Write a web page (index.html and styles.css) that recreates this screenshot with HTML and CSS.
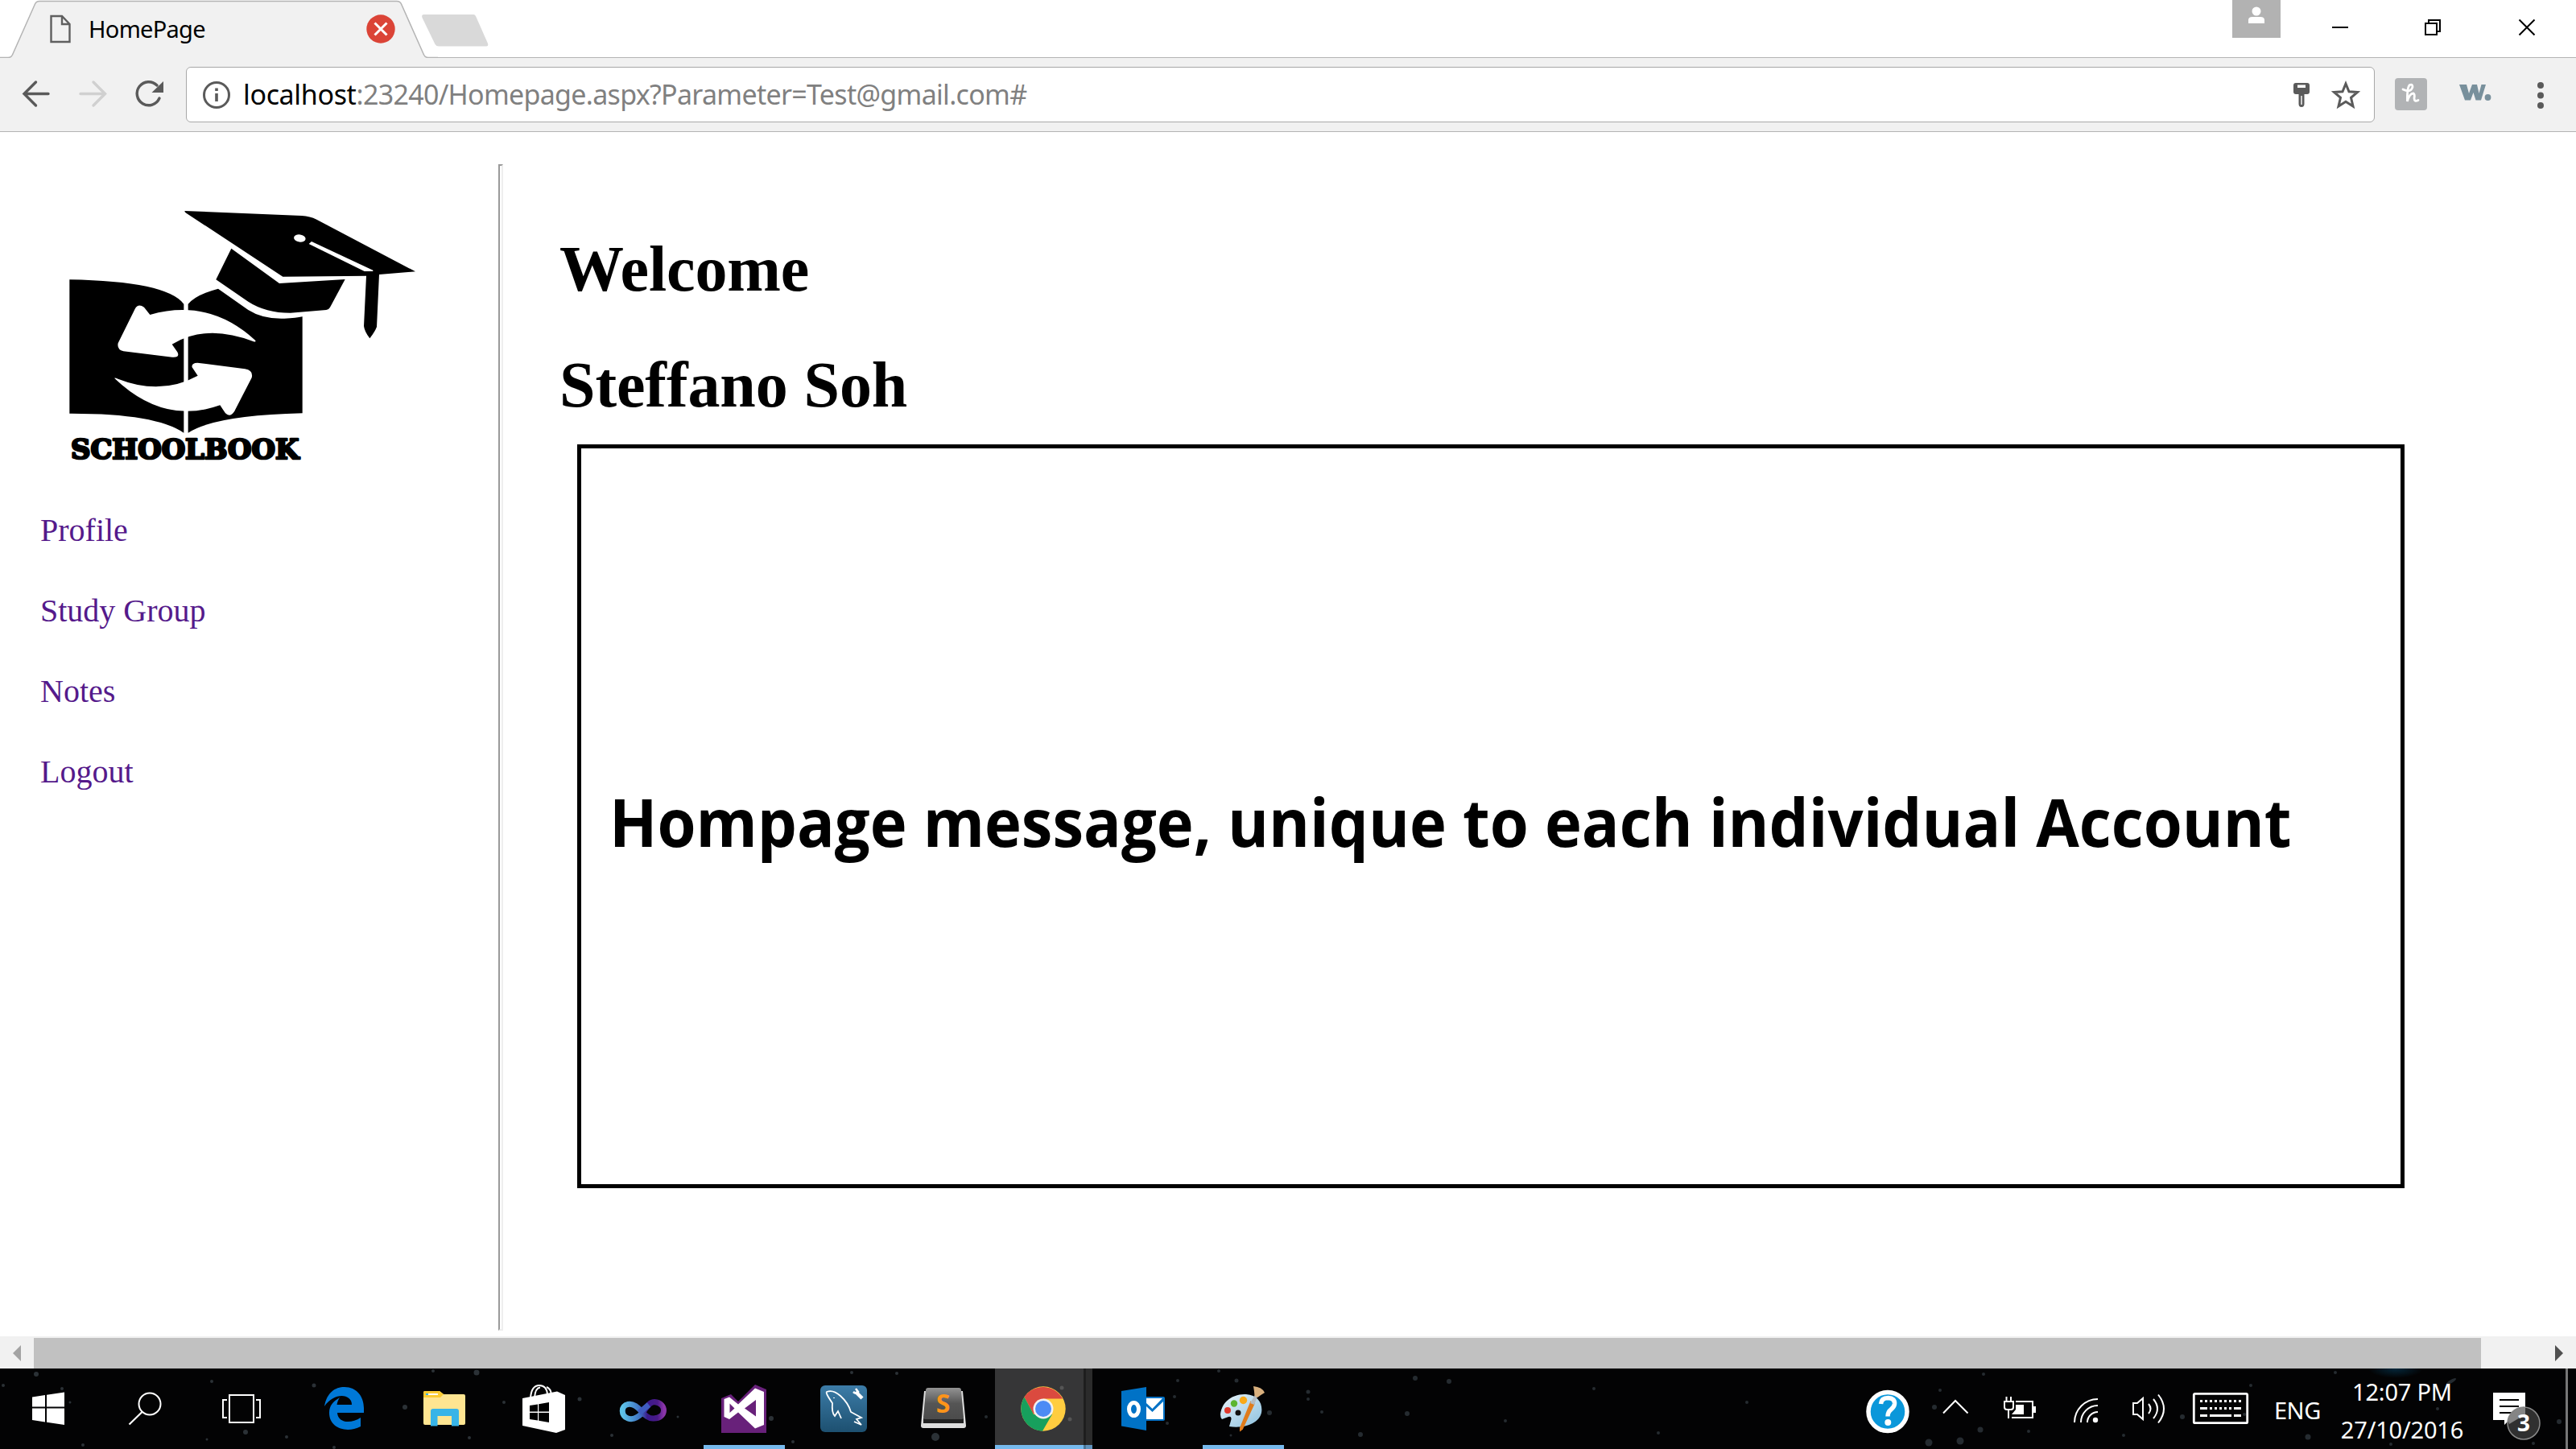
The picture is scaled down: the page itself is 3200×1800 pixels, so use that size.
FILE: index.html
```html
<!DOCTYPE html>
<html lang="en">
<head>
<meta charset="utf-8">
<title>HomePage</title>
<link rel="stylesheet" href="styles.css">
</head>
<body>
<header class="tabstrip">
  <div class="tab">
    <svg class="tab-shape" viewBox="0 0 544 72"><path d="M0 71.5H11Q14 71.5 15 68L43 5Q45 1.500 49 1.500H493Q497 1.500 499 5L527 68Q528 71.500 532 71.500H544V72H0z" fill="#f1f1f1"/><path d="M0 71.500H10Q14 71.500 15.500 68L43.500 5Q45 1.500 49 1.500H493Q497 1.500 498.500 5L526.500 68Q528 71.500 532 71.500H544" fill="none" stroke="#b4b4b4" stroke-width="1.500"/></svg>
    <svg class="tab-doc" viewBox="62 18 27 38"><path d="M63.500 21H77L86.500 31V53H63.500zM77 21V31H86.500" fill="none" stroke="#5f5f5f" stroke-width="2.400"/></svg>
    <span class="tab-title">HomePage</span>
    <svg class="tab-close" viewBox="0 0 36 36"><circle cx="18" cy="18" r="17.700" fill="#db4437"/><path d="M10.500 10.500L25.500 25.500M25.500 10.500L10.500 25.500" stroke="#fff" stroke-width="3"/></svg>
  </div>
  <svg class="newtab" viewBox="523 17 85 42"><path d="M527 18H588Q590 18 591 20L606 54Q607 57.500 604 57.500H545Q542 57.500 540.500 55L524.500 22Q523 18 527 18z" fill="#d9d9d9"/></svg>
  <div class="win">
    <svg viewBox="2773 0 427 71" width="427" height="71"><path d="M2773 0h60v47h-60z" fill="#b2b2b2"/><circle cx="2803" cy="14" r="5.500" fill="#fff"/><path d="M2793 29V25Q2793 21 2798 21H2808Q2813 21 2813 25V29z" fill="#fff"/><path d="M2897 33h20v2h-20z"/><path d="M3013 29h14v14h-14zM3017 29v-4h14v14h-4" fill="none" stroke="#000" stroke-width="2"/><path d="M3129.500 24.500L3148.500 43.500M3148.500 24.500L3129.500 43.500" stroke="#000" stroke-width="2"/></svg>
  </div>
</header>
<div class="toolbar">
  <svg class="nav-icons" viewBox="0 72 231 91"><g fill="none" stroke-width="3.400" stroke-linecap="round"><path d="M60 116.500H31M44.500 102L30 116.500L44.500 131" stroke="#5a5a5a"/><path d="M100 116.500H130M116 102L130.500 116.500L116 131" stroke="#d0d0d0"/><path d="M198 122A14.500 14.500 0 1 1 195 106" stroke="#5a5a5a"/></g><path d="M203 101V115H188.500z" fill="#5a5a5a"/></svg>
  <div class="omnibox">
    <svg class="info" viewBox="0 0 36 36"><circle cx="18" cy="18" r="15.500" fill="none" stroke="#5a5a5a" stroke-width="3"/><path d="M16.200 16h3.600v10h-3.600zM16.200 9.500h3.600v3.600h-3.600z" fill="#5a5a5a"/></svg>
    <span class="url"><b class="host">localhost</b><span class="path">:23240/Homepage.aspx?Parameter=Test@gmail.com#</span></span>
    <svg class="omni-right" viewBox="2840 84 108 66"><path d="M2851 102h14q3 0 3 3v8q0 3-3 3h-3.500v12q0 4-3.500 4t-3.500-4v-12h-3.500q-3 0-3-3v-8q0-3 3-3z" fill="#5a5a5a"/><path d="M2853 104.500h10v3.500h-10zM2857.300 118h1.400v11h-1.400z" fill="#fff"/><path d="M2913 103L2917 112.700L2927.500 113.500L2919.500 120.300L2922 131L2913 125.300L2904 131L2906.500 120.300L2898.500 113.500L2909 112.700z" fill="none" stroke="#5a5a5a" stroke-width="3"/></svg>
  </div>
  <svg class="ext" viewBox="2950 72 250 91"><rect x="2975" y="97" width="40" height="40" rx="4" fill="#b1b3b5"/><path d="M2985 111Q2995 116 2997 108Q2997 104 2993.500 105.500Q2990 108 2990.500 126Q2993 116 2998 116Q3000 117 2999 122Q2999 127 3004 124.500" fill="none" stroke="#fff" stroke-width="2.800" stroke-linecap="round"/><path d="M3055 105H3064L3067 116L3071 105H3077L3079.500 116L3082.500 105H3088L3082 124.500H3075.500L3072.500 115L3069 124.500H3062z" fill="#78909c"/><circle cx="3090.500" cy="121" r="3.900" fill="#78909c"/><g fill="#5a5a5a"><circle cx="3156" cy="106" r="4"/><circle cx="3156" cy="118.500" r="4"/><circle cx="3156" cy="131" r="4"/></g></svg>
</div>
<main class="page">
  <aside class="sidebar">
    <svg class="logo" viewBox="0 0 1440 1080">
      <path d="M79 352Q440 358 505 443V923Q400 850 79 851zM521 443Q550 408 633 386L745 465Q800 500 880 497Q925 495 947 490V850Q620 858 521 923z"/>
      <path d="M508 96L945 114Q975 116 1000 128L1368 322L1233 333L1224 528Q1218 545 1198 571Q1178 545 1176 525L1185 338L874 341L514 104Q508 101 508 96zM682 236L861 366L1106 351L1050 455Q1046 463 1036 465L902 476Q810 476 745 434L625 352z"/>
      <g fill="#fff"><ellipse cx="937" cy="198" rx="22" ry="14" transform="rotate(8 937 198)"/><path d="M981 210L1210 317V321H1178L971 219z"/>
      <path d="M323 461Q335 440 357 455L379 483Q600 420 772 579Q774 585 765 583Q590 515 461 593L481 622Q492 643 462 641L280 619Q255 613 260 589z"/>
      <path d="M247 720Q246 716 260 722Q420 785 557 710L536 679Q532 663 556 662L733 685Q765 690 758 718L694 842Q678 867 660 850L640 820Q430 895 247 720z"/></g>
      <text x="84" y="1020" textLength="850" lengthAdjust="spacingAndGlyphs" class="logo-text">SCHOOLBOOK</text>
    </svg>
    <nav class="menu"><a>Profile</a><a>Study Group</a><a>Notes</a><a>Logout</a></nav>
  </aside>
  <div class="divider"></div>
  <section class="content">
    <h1>Welcome</h1>
    <h1>Steffano Soh</h1>
    <div class="message"><span class="msg">Hompage message, unique to each individual Account</span></div>
  </section>
</main>
<div class="scrollbar">
  <svg width="42" height="40" viewBox="0 0 42 40"><path d="M26 11V31L16 21z" fill="#a3a3a3"/></svg>
  <div class="thumb"></div>
  <svg width="118" height="40" viewBox="0 0 118 40"><path d="M92 11V31L102 21z" fill="#505050"/></svg>
</div>
<footer class="taskbar">
  <svg class="stars" viewBox="0 1700 3200 100">
    <defs><radialGradient id="neb"><stop offset="0" stop-color="#04283c"/><stop offset="1" stop-color="#04283c" stop-opacity="0"/></radialGradient></defs>
    <ellipse cx="2976" cy="1700" rx="34" ry="12" fill="url(#neb)"/>
    <g class="star-a"><circle cx="45" cy="1707" r="3"/><circle cx="4" cy="1721" r="2"/><circle cx="77" cy="1725" r="2"/><circle cx="87" cy="1742" r="1.500"/><circle cx="263" cy="1716" r="2"/><circle cx="390" cy="1721" r="2.500"/><circle cx="503" cy="1748" r="3"/><circle cx="305" cy="1779" r="3"/><circle cx="356" cy="1785" r="2"/><circle cx="103" cy="1795" r="2"/><circle cx="257" cy="1788" r="1.500"/><circle cx="592" cy="1705" r="3.500"/><circle cx="538" cy="1703" r="2"/><circle cx="583" cy="1786" r="2"/><circle cx="415" cy="1798" r="2"/><circle cx="626" cy="1742" r="2"/><circle cx="720" cy="1738" r="2.500"/><circle cx="1058" cy="1705" r="2"/><circle cx="1114" cy="1706" r="2"/><circle cx="958" cy="1762" r="3"/><circle cx="1162" cy="1785" r="5"/><circle cx="760" cy="1783" r="2"/><circle cx="985" cy="1791" r="2"/><circle cx="842" cy="1760" r="1.500"/></g>
    <g class="star-b"><circle cx="1536" cy="1715" r="2.500"/><circle cx="1463" cy="1715" r="2"/><circle cx="1514" cy="1703" r="2"/><circle cx="1459" cy="1735" r="2"/><circle cx="1577" cy="1755" r="3"/><circle cx="1625" cy="1729" r="2.500"/><circle cx="1625" cy="1738" r="2"/><circle cx="1642" cy="1754" r="2"/><circle cx="1450" cy="1768" r="2"/><circle cx="1225" cy="1760" r="2"/><circle cx="1529" cy="1783" r="1.500"/><circle cx="1690" cy="1782" r="3"/><circle cx="1758" cy="1712" r="3"/><circle cx="1800" cy="1716" r="3"/><circle cx="1748" cy="1756" r="3"/><circle cx="1870" cy="1765" r="2"/><circle cx="1980" cy="1725" r="2"/><circle cx="2060" cy="1780" r="2"/><circle cx="2170" cy="1742" r="2"/><circle cx="2403" cy="1748" r="3"/><circle cx="2396" cy="1792" r="4.500"/><circle cx="2435" cy="1790" r="4.500"/><circle cx="2460" cy="1776" r="3.500"/><circle cx="2464" cy="1707" r="2"/><circle cx="2410" cy="1727" r="2"/><circle cx="2711" cy="1760" r="3"/><circle cx="2638" cy="1783" r="2"/><circle cx="2520" cy="1778" r="2"/><circle cx="2867" cy="1785" r="3.500"/><circle cx="2901" cy="1705" r="2"/><circle cx="3179" cy="1766" r="3"/><circle cx="3028" cy="1750" r="2"/><circle cx="2796" cy="1721" r="2"/><circle cx="2788" cy="1757" r="2"/><circle cx="2970" cy="1794" r="2"/><circle cx="3147" cy="1793" r="2"/><ellipse cx="3045" cy="1716" rx="7" ry="2" transform="rotate(-30 3045 1716)"/></g>
  </svg>
  <svg viewBox="0 1700 120 100" width="120"><path d="M40 1735.500L56 1733V1747.500H40zM58 1732.700L80 1729.500V1747.500H58zM40 1749.500H56V1766.500L40 1764zM58 1749.500H80V1770L58 1766.800z" fill="#fff"/></svg>
  <svg viewBox="120 1700 120 100" width="120"><circle cx="186" cy="1744" r="13.500" fill="none" stroke="#fff" stroke-width="2"/><path d="M176.500 1754L160.500 1769.500" stroke="#fff" stroke-width="2.200"/></svg>
  <svg viewBox="240 1700 126 100" width="126"><path d="M285 1733h30v34h-30zM282 1739h-5v22h5M318 1739h5v22h-5" fill="none" stroke="#fff" stroke-width="2"/></svg>
  <svg viewBox="366 1700 124 100" width="124"><path d="M403 1747C406 1730 416 1723 428 1723C443 1723 452 1735 452 1749V1755H419C420 1768 436 1769 448 1761V1772C430 1781 409 1774 409 1755C409 1746 414 1741 422 1736C420 1739 419 1742 418.500 1745H437C437 1731 415 1729 403 1747z" fill="#0078d7"/></svg>
  <svg viewBox="490 1700 124 100" width="124"><path d="M526 1730Q526 1728 528 1728H546L551 1732H576Q578 1732 578 1734V1768Q578 1770 576 1770H528Q526 1770 526 1768z" fill="#ffe591"/><path d="M526 1730Q526 1728 528 1728H546L551 1732L547 1736H526z" fill="#fccc32"/><path d="M532 1731h12v2h-12z" fill="#fff"/><path d="M529 1731h3v2h-3z" fill="#38b4e8"/><path d="M535 1771.500V1753Q535 1750 538 1750H567Q570 1750 570 1753V1771.500H561V1759H543.500V1771.500z" fill="#38b4e8"/></svg>
  <svg viewBox="614 1700 124 100" width="124"><path d="M649 1737L692 1728.500L702 1733V1776L691 1780L649 1771z" fill="#fff"/><path d="M659 1737Q660 1721 670 1721Q679 1721 680 1732M664 1736Q665 1724 671 1723.500M679 1723Q684 1725 685 1732" fill="none" stroke="#fff" stroke-width="2"/><path d="M658 1746L668 1744.500V1753.500H658zM669.200 1744.200L682 1742V1753.500H669.200zM658 1755H668V1764.500L658 1763zM669.200 1755H682V1767L669.200 1764.700z" fill="#000"/></svg>
  <svg viewBox="738 1700 124 100" width="124"><defs><linearGradient id="inf"><stop offset="0" stop-color="#5ec3e8"/><stop offset=".45" stop-color="#3d6cc0"/><stop offset=".6" stop-color="#3b1a8c"/><stop offset=".85" stop-color="#4a1a88"/><stop offset="1" stop-color="#8a35a8"/></linearGradient></defs><path d="M799 1754C790 1764 783 1763 780 1762C771 1759 771 1746 780 1744.500C794 1742 799 1763 812 1762C828 1762 829 1743 813 1741.500C806 1741.500 803 1749 799 1754z" fill="none" stroke="url(#inf)" stroke-width="7"/><path d="M794 1755L806 1745" stroke="#3f5cc0" stroke-width="7"/></svg>
  <svg viewBox="862 1700 124 100" width="124"><path d="M896 1737L908 1732L917 1741L938 1720L952 1726V1780H896z" fill="#68217a"/><path d="M899.500 1738L906 1735.500L917 1744.500L938 1724.500L949 1729V1770L938 1774.500L917 1754.500L906 1763L899.500 1760zM906.500 1743.500V1755L912.500 1749.500zM939 1739L925 1749.500L939 1759.500z" fill="#fff" fill-rule="evenodd"/><path d="M874 1795h101v5H874z" fill="#76b9ed"/></svg>
  <svg viewBox="986 1700 124 100" width="124"><defs><linearGradient id="sql" x2="0" y2="1"><stop offset="0" stop-color="#3c7ca8"/><stop offset="1" stop-color="#1d5070"/></linearGradient></defs><rect x="1019" y="1721" width="58" height="58" rx="6" fill="url(#sql)"/><path d="M1045 1762L1041 1753L1037 1759Q1033 1755 1034 1743Q1025 1730 1027 1729Q1035 1726 1044 1734Q1054 1743 1057 1754L1070 1761L1064 1763L1070 1770L1061 1766M1036 1736v1" fill="none" stroke="#fff" stroke-width="1.800"/><path d="M1063 1729L1071 1737" stroke="#fff" stroke-width="4.500"/><path d="M1060 1729Q1063 1732 1066 1729L1063 1725" stroke="#fff" stroke-width="2.500" fill="none"/></svg>
  <svg viewBox="1110 1700 126 100" width="126"><defs><linearGradient id="sub" x2="0" y2="1"><stop offset="0" stop-color="#939393"/><stop offset=".5" stop-color="#555"/><stop offset="1" stop-color="#4b4b4b"/></linearGradient></defs><path d="M1148 1728H1196L1200 1771Q1200 1774 1197 1774H1147Q1144 1774 1144 1771z" fill="#dedede"/><path d="M1147 1762H1197V1768H1147z" fill="#222"/><path d="M1150 1727Q1150 1724 1153 1724H1191Q1194 1724 1194 1727L1197 1761Q1197 1763 1195 1763H1149Q1147 1763 1147 1761z" fill="url(#sub)"/><text x="1171.500" y="1755" class="sub-s">S</text></svg>
  <svg viewBox="1236 1700 121 100" width="121"><path d="M1236 1700h110v100h-110z" fill="#363637"/><path d="M1346 1700h3v100h-3z" fill="#1e1e1e"/><path d="M1349 1700h8v100h-8z" fill="#2b2b2b"/><circle cx="1319" cy="1724" r="2.500" fill="#555"/><circle cx="1329" cy="1763" r="2.500" fill="#555"/><path d="M1236 1795h110v5h-110z" fill="#76b9ed"/><path d="M1346 1795h3v5h-3z" fill="#4b7596"/><path d="M1349 1795h8v5h-8z" fill="#6093bd"/><circle cx="1296" cy="1750" r="27.700" fill="#ffcd40"/><path d="M1272.500 1735.500A27.700 27.700 0 0 1 1320 1737.500H1296L1284 1757z" fill="#db4a3f"/><path d="M1272.500 1735.500A27.700 27.700 0 0 0 1295 1777.700L1307 1757L1284 1757z" fill="#17a05d"/><circle cx="1296" cy="1750" r="12.500" fill="#f1f1f1"/><circle cx="1296" cy="1750" r="10" fill="#4c8bf5"/></svg>
  <svg viewBox="1357 1700 125 100" width="125"><rect x="1420" y="1735" width="27" height="30" rx="2" fill="#0072c6"/><path d="M1424 1737H1444L1431.500 1750L1424 1743zM1424 1747L1431.500 1754L1445 1741V1763H1424z" fill="#fff"/><path d="M1393 1728L1424 1723V1777L1393 1771.500z" fill="#0072c6"/><ellipse cx="1408.500" cy="1750.500" rx="6" ry="8" fill="none" stroke="#fff" stroke-width="5"/></svg>
  <svg viewBox="1482 1700 124 100" width="124"><defs><linearGradient id="pal" x2="1" y2="1"><stop offset="0" stop-color="#eaf5fb"/><stop offset="1" stop-color="#8cc0de"/></linearGradient></defs><path d="M1516 1757C1518 1740 1533 1731 1548 1732C1563 1733 1569 1744 1567 1755C1564 1768 1546 1775 1527 1772L1529 1765Q1531 1759 1526 1760L1518 1763Q1516 1761 1516 1757z" fill="url(#pal)"/><circle cx="1538" cy="1755" r="3.500" fill="#111"/><circle cx="1525" cy="1752" r="4" fill="#e0392d"/><circle cx="1533" cy="1743.500" r="4.200" fill="#5cb531"/><circle cx="1544.500" cy="1739.500" r="4.700" fill="#f9a917"/><path d="M1554 1742L1557.500 1744L1543 1775L1541 1776.500L1541 1774z" fill="#e07c1c" stroke="#e07c1c" stroke-width="2"/><path d="M1553 1743L1559 1733L1562 1735L1558 1745z" fill="#b4bcc2"/><path d="M1557 1722Q1568 1723 1571 1730Q1566 1733 1562 1736L1558.500 1734Q1558 1727 1557 1722z" fill="#d9b07e"/><path d="M1494 1795h101v5h-101z" fill="#76b9ed"/></svg>
  <svg class="tray" viewBox="2300 1700 510 100" width="510"><circle cx="2345" cy="1753.500" r="24" fill="#0a97da" stroke="#fff" stroke-width="5.500"/><path d="M2336.500 1744Q2337 1736.500 2345.500 1736.500Q2354 1737 2353.500 1744Q2353 1748 2349 1751Q2345 1754 2345 1759.500" fill="none" stroke="#fff" stroke-width="5.500"/><circle cx="2345.300" cy="1767" r="4" fill="#fff"/>
  <g fill="none" stroke="#fff" stroke-width="2"><path d="M2414 1755.500L2429 1740L2444.500 1755.500"/><path d="M2504 1741h21v20h-26M2490 1741h11v7q0 3-3 3h-5q-3 0-3-3zM2492.500 1740v-5M2498 1740v-5M2495 1751v11"/><path d="M2527 1747v8" stroke-width="4"/><path d="M2606 1738A29 29 0 0 0 2577 1767M2606 1746A21 21 0 0 0 2585 1767M2606 1754A13 13 0 0 0 2593 1767"/><path d="M2650 1743h5l7-6v26l-7-6h-5zM2669 1744q5 6 0 12M2675 1738q10 12 0 24M2681 1732.500q14 17.500 0 35"/></g><path d="M2504 1745h10v12h-15l5-6z" fill="#fff"/><circle cx="2603" cy="1764" r="3.200" fill="#fff"/>
  <rect x="2725.300" y="1731.300" width="66.400" height="36.400" rx="1.500" fill="none" stroke="#fff" stroke-width="2.800"/><g stroke="#fff" stroke-width="3"><path d="M2733 1740.500h51M2745 1749.500h29" stroke-dasharray="3 3"/><path d="M2733 1749.500h9M2775 1749.500h9M2733 1758.500h9M2745 1758.500h27M2775 1758.500h9"/></g></svg>
  <span class="lang">ENG</span>
  <div class="clock"><span class="time">12:07 PM</span><span class="date">27/10/2016</span></div>
  <svg viewBox="3080 1700 120 100" width="120"><path d="M3097 1730h40v34h-20l-6 6v-6h-14z" fill="#fff"/><path d="M3105 1739h24M3105 1747h24M3105 1755h24" stroke="#000" stroke-width="2"/><circle cx="3135" cy="1768" r="20" fill="#303030" stroke="#8a8a8a" stroke-width="1.500"/><path d="M3115.800 1764A20 20 0 0 1 3135 1748.500H3137V1757L3117 1769z" fill="#858585"/><text x="3135" y="1778" class="badge">3</text><path d="M3187 1700h3v100h-3z" fill="#777"/></svg>
</footer>
</body>
</html>
```
FILE: styles.css
```css
* { box-sizing: border-box; }
body { margin: 0; width: 3200px; height: 1800px; overflow: hidden; display: flex; flex-direction: column; background: #fff; font-family: "Noto Sans", sans-serif; }
svg { display: block; flex: none; }
.tabstrip { height: 72px; display: flex; border-bottom: 1px solid #b4b4b4; }
.tab { position: relative; width: 523px; height: 72px; flex: none; display: flex; align-items: center; padding-left: 62px; }
.tab-shape { position: absolute; left: 0; top: 0; width: 544px; height: 72px; }
.tab-doc { position: relative; width: 27px; height: 38px; }
.tab-title { position: relative; width: 345px; margin-left: 21px; font-size: 29px; line-height: 40px; letter-spacing: -0.7px; color: #000; }
.tab-close { position: relative; width: 36px; height: 36px; }
.newtab { position: relative; width: 85px; height: 42px; margin-top: 17px; }
.win { margin-left: auto; }
.toolbar { height: 92px; display: flex; background: #f1f1f1; border-bottom: 1px solid #b4b4b4; }
.nav-icons { width: 231px; height: 91px; }
.omnibox { width: 2719px; height: 69px; margin-top: 11px; display: flex; align-items: center; background: #fff; border: 1px solid #a8a8a8; border-radius: 6px; }
.info { width: 36px; height: 36px; margin-left: 19px; }
.url { flex: 1; margin: -2px 0 0 15px; font-size: 34px; line-height: 46px; letter-spacing: -0.7px; white-space: nowrap; color: #808080; }
.host { font-weight: 400; letter-spacing: -0.35px; color: #000; }
.omni-right { width: 108px; height: 66px; }
.ext { width: 250px; height: 91px; }
.page { height: 1496px; display: flex; font-family: "Liberation Serif", serif; }
.sidebar { width: 619px; padding-top: 66px; }
.logo { width: 480px; height: 360px; margin-left: 60px; }
.logo-text { font: bold 102px "DejaVu Serif", serif; stroke: #000; stroke-width: 8px; stroke-linejoin: round; }
.menu { margin: 19px 0 0 50px; display: flex; flex-direction: column; font-size: 40px; line-height: 100px; color: #551a8b; }
.divider { width: 6px; height: 1449px; margin-top: 40px; border: 2px solid; border-color: #9a9a9a #eee #eee #9a9a9a; }
.content { margin-left: 71px; }
h1 { margin: 0 0 0 -1px; font-size: 80px; line-height: 92px; font-weight: bold; letter-spacing: -0.1px; }
.content h1:first-child { margin-top: 124px; margin-bottom: 52px; }
.message { width: 2270px; height: 924px; margin: 28px 0 0 21px; border: 5px solid #000; padding: 408px 0 0 35px; }
.msg { display: inline-block; font: bold 82px/110px "Open Sans", sans-serif; white-space: nowrap; transform: scaleX(0.947); transform-origin: 0 0; }
.scrollbar { height: 40px; display: flex; background: #f1f1f1; }
.thumb { width: 3040px; height: 38px; margin-top: 2px; background: #c1c1c1; }
.taskbar { position: relative; height: 100px; display: flex; background: #030304; color: #fff; font-size: 29px; }
.taskbar svg { position: relative; height: 100px; }
.taskbar .stars { position: absolute; left: 0; top: 0; width: 3200px; }
.star-a { fill: #2b3136; }
.star-b { fill: #252b30; }
.taskbar .tray { margin-left: auto; }
.sub-s { font: bold 32px "Open Sans", sans-serif; fill: #ff9419; text-anchor: middle; }
.badge { font: bold 28px "Noto Sans", sans-serif; fill: #fff; text-anchor: middle; }
.lang { position: relative; width: 90px; padding-left: 15px; line-height: 40px; margin-top: 32px; letter-spacing: -0.5px; }
.clock { position: relative; width: 180px; display: flex; flex-direction: column; align-items: center; padding: 5px 12px 0 0; line-height: 47px; letter-spacing: -0.2px; }
```
